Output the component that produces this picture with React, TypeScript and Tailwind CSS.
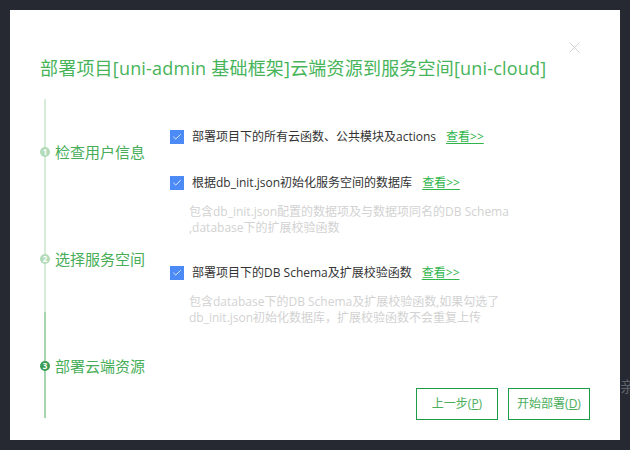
import { Check, X } from 'lucide-react'

const cjk = { fontFamily: '"Open Sans", "Noto Sans CJK SC", sans-serif' }

function CheckBox() {
  return (
    <span className="flex h-[14px] w-[14px] shrink-0 items-center justify-center bg-[#4c8bf5]">
      <Check className="h-[10px] w-[10px] text-white" strokeWidth={2} />
    </span>
  )
}

function StepDot({ n, active }: { n: number; active?: boolean }) {
  return (
    <span
      className={
        'z-10 flex h-[10px] w-[10px] shrink-0 items-center justify-center rounded-full text-[8px] font-bold leading-none text-white ' +
        (active ? 'bg-[#3a9c52]' : 'bg-[#b3dbb9]')
      }
    >
      {n}
    </span>
  )
}

function Option({ label }: { label: string }) {
  return (
    <div className="flex h-[20px] items-center">
      <CheckBox />
      <span className="ml-[8px] text-[12px] text-[#333]">{label}</span>
      <a className="ml-[10px] text-[12px] text-[#2fb54c] underline underline-offset-2">查看&gt;&gt;</a>
    </div>
  )
}

export default function App() {
  return (
    <div className="relative h-[450px] w-[630px] overflow-hidden bg-[#262932] p-[10px]" style={cjk}>
      <div className="relative flex h-[430px] w-[610px] flex-col bg-white px-[30px]">
        <X className="absolute left-[555px] top-[28px] h-[19px] w-[19px] text-[#c8c8c8]" strokeWidth={1} />
        <h1 className="mt-[46px] text-[18px] leading-[24px] tracking-[0.2px] text-[#47b45a]">
          部署项目[uni-admin 基础框架]云端资源到服务空间[uni-cloud]
        </h1>

        <div className="mt-[19px] flex h-[321px]">
          <div className="relative w-[130px] shrink-0">
            <div className="absolute left-[4px] top-0 flex w-[2px] flex-col">
              <div className="h-[213px] bg-[#d6edd9]" />
              <div className="h-[106px] bg-[#a6d6ae]" />
            </div>
            <div className="flex flex-col gap-[87px] pt-[43px]">
              <div className="flex h-[20px] items-center">
                <StepDot n={1} />
                <span className="ml-[5px] text-[15px] text-[#47ad58]">检查用户信息</span>
              </div>
              <div className="flex h-[20px] items-center">
                <StepDot n={2} />
                <span className="ml-[5px] text-[15px] text-[#47ad58]">选择服务空间</span>
              </div>
              <div className="flex h-[20px] items-center">
                <StepDot n={3} active />
                <span className="ml-[5px] text-[15px] text-[#47ad58]">部署云端资源</span>
              </div>
            </div>
          </div>

          <div className="flex flex-1 flex-col pt-[28px]">
            <Option label="部署项目下的所有云函数、公共模块及actions" />
            <div className="mt-[26px]">
              <Option label="根据db_init.json初始化服务空间的数据库" />
            </div>
            <div className="ml-[19px] mt-[11px] text-[12px] leading-[16px] text-[#d2d2d2]">
              <div>包含db_init.json配置的数据项及与数据项同名的DB Schema</div>
              <div>,database下的扩展校验函数</div>
            </div>
            <div className="mt-[27px]">
              <Option label="部署项目下的DB Schema及扩展校验函数" />
            </div>
            <div className="ml-[19px] mt-[11px] text-[12px] leading-[16px] text-[#d2d2d2]">
              <div>包含database下的DB Schema及扩展校验函数,如果勾选了</div>
              <div>db_init.json初始化数据库，扩展校验函数不会重复上传</div>
            </div>

            <div className="mt-auto flex justify-end gap-[10px]">
              <button className="flex h-[32px] w-[82px] items-center justify-center border border-[#1c9a47] text-[12px] text-[#4aae5c]">
                上一步(<span className="underline">P</span>)
              </button>
              <button className="flex h-[32px] w-[82px] items-center justify-center border border-[#1c9a47] text-[12px] text-[#4aae5c]">
                开始部署(<span className="underline">D</span>)
              </button>
            </div>
          </div>
        </div>
      </div>
      <span className="absolute left-[620px] top-[375px] text-[15px] text-[#5e626a]">亲</span>
    </div>
  )
}
